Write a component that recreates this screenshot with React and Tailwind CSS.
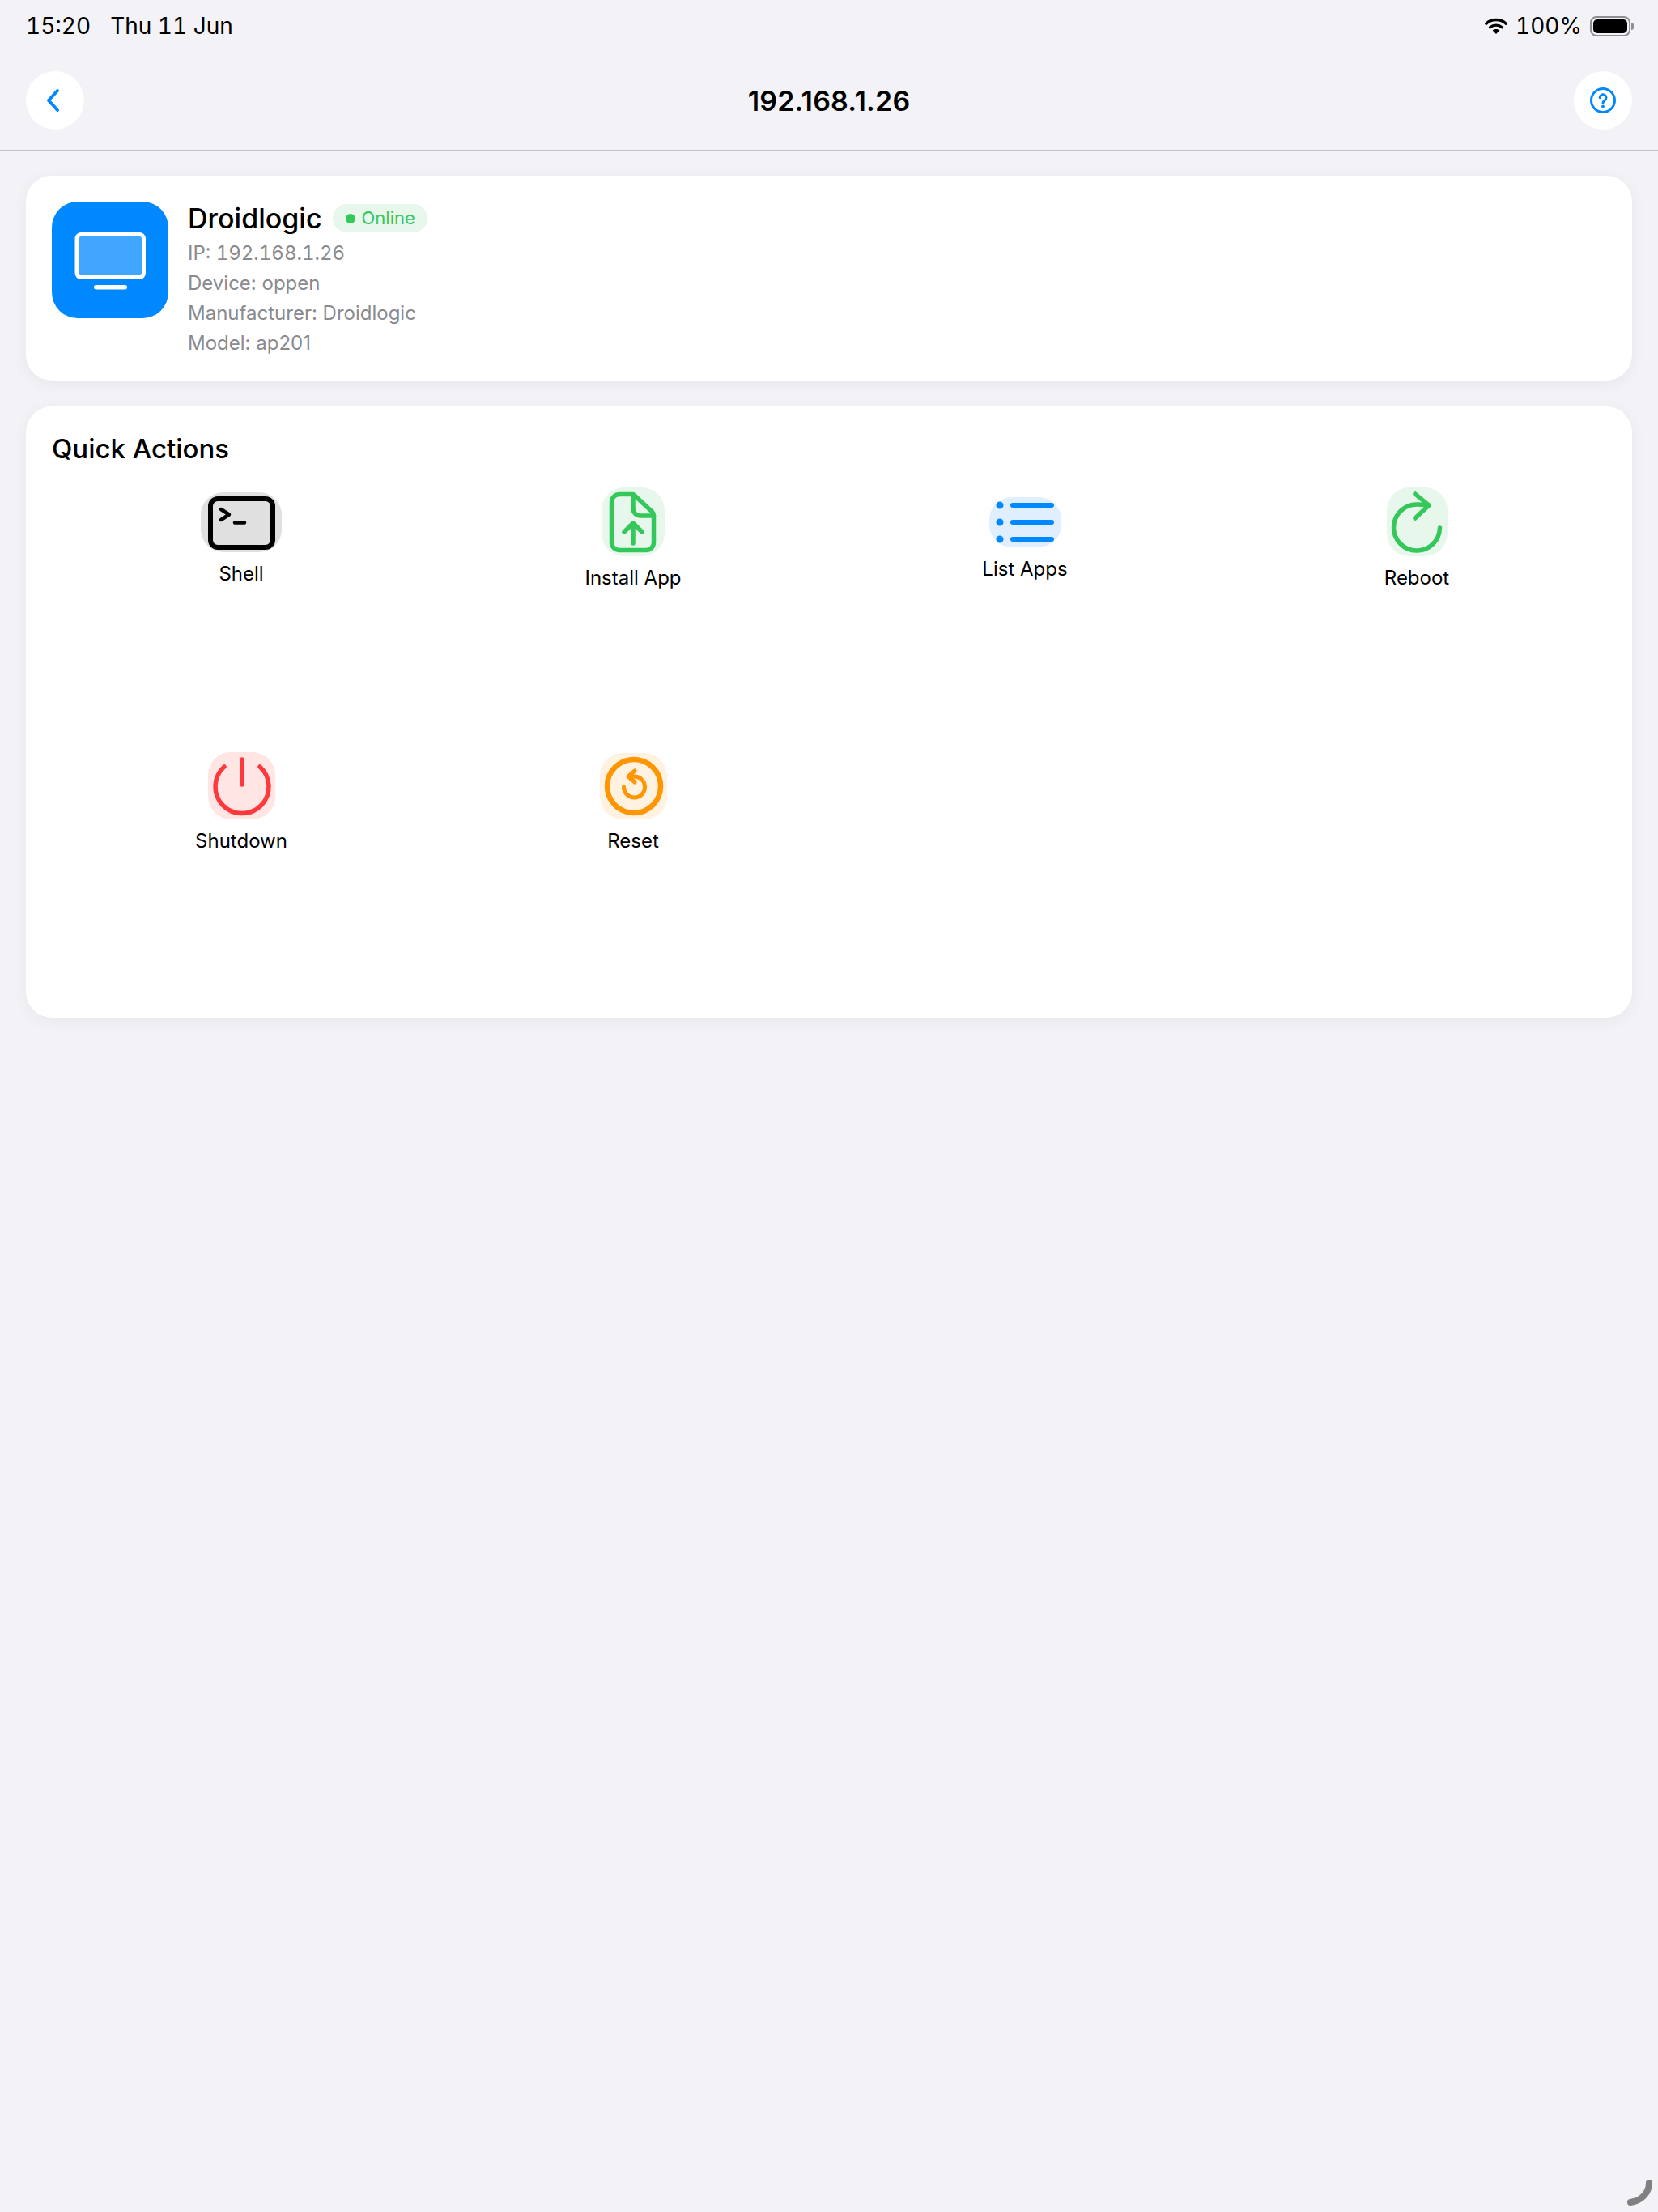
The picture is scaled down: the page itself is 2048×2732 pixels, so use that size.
import React from "react";

function Wifi() {
  return (
    <svg width="28" height="20" viewBox="0 0 28 20" fill="none">
      <path d="M1.8 7.2C8.6 1 19.4 1 26.2 7.2" stroke="black" strokeWidth="3.4" strokeLinecap="round" />
      <path d="M6.6 11.8C10.8 8.2 17.2 8.2 21.4 11.8" stroke="black" strokeWidth="3.4" strokeLinecap="round" />
      <path d="M14 20L9.6 15.6C12 13.6 16 13.6 18.4 15.6Z" fill="black" />
    </svg>
  );
}

function Battery() {
  return (
    <div className="flex items-center">
      <div className="w-[50px] h-[25px] rounded-[8px] border-[2px] border-[#8e8e93] p-[2px]">
        <div className="w-full h-full rounded-[5px] bg-black"></div>
      </div>
      <div className="w-[3px] h-[9px] rounded-r-full bg-[#8e8e93] ml-[1px]"></div>
    </div>
  );
}

function Monitor() {
  return (
    <svg width="144" height="144" viewBox="0 0 144 144" fill="none">
      <rect x="31" y="40.5" width="82.5" height="53" rx="5" fill="white" fillOpacity="0.25" stroke="white" strokeWidth="5" />
      <rect x="52" y="103" width="41" height="5.5" rx="2.75" fill="white" />
    </svg>
  );
}

const actions = [
  {
    label: "Shell",
    tile: "w-[100px] h-[74px] bg-[#e0e0e0] rounded-[28px]",
    stroke: "#000000",
    width: 6,
    paths: (
      <>
        <rect x="12" y="8" width="77" height="60" rx="9" />
        <path d="M25 21L35 27.5L25 34" strokeWidth="4.5" />
        <path d="M42 37.5H54" strokeWidth="4.5" />
      </>
    ),
  },
  {
    label: "Install App",
    tile: "w-[78px] h-[85px] bg-[#e8f7ec] rounded-[28px]",
    stroke: "#34c759",
    width: 5.5,
    paths: (
      <>
        <path d="M22 8.5H37q2.5 0 4.5 2L62.5 30q2 2 2 5V68a9.5 9.5 0 0 1-9.5 9.5H22a9.5 9.5 0 0 1-9.5-9.5V18a9.5 9.5 0 0 1 9.5-9.5Z" />
        <path d="M39 8.5V26a9 9 0 0 0 9 9H64.5" />
        <path d="M39 69V44M28 55L39 44L50 55" />
      </>
    ),
  },
  {
    label: "List Apps",
    tile: "w-[89px] h-[62px] bg-[#e0efff] rounded-[28px]",
    stroke: "#0088ff",
    width: 6,
    paths: (
      <>
        <path d="M29 10H77M29 31H77M29 52H77" />
        <circle cx="13" cy="10" r="4.5" fill="#0088ff" stroke="none" />
        <circle cx="13" cy="31" r="4.5" fill="#0088ff" stroke="none" />
        <circle cx="13" cy="52" r="4.5" fill="#0088ff" stroke="none" />
      </>
    ),
  },
  {
    label: "Reboot",
    tile: "w-[75px] h-[85px] bg-[#e8f7ec] rounded-[28px]",
    stroke: "#34c759",
    width: 5.5,
    paths: (
      <>
        <path d="M65.5 50A28.5 28.5 0 1 1 37 21Q44 21 52 22" />
        <path d="M35 8L52 22L35 38" />
      </>
    ),
  },
  {
    label: "Shutdown",
    tile: "w-[83px] h-[83px] bg-[#ffe6e5] rounded-[28px]",
    stroke: "#ff383c",
    width: 5.5,
    paths: (
      <>
        <path d="M20 18A33 33 0 1 0 64 18" />
        <path d="M42 9V40" />
      </>
    ),
  },
  {
    label: "Reset",
    tile: "w-[83px] h-[82px] bg-[#fff2e0] rounded-[28px]",
    stroke: "#ff9500",
    width: 6.5,
    paths: (
      <>
        <circle cx="42" cy="41" r="33" />
        <path d="M29.5 42A13 13 0 1 0 42 29H36" strokeWidth="5" />
        <path d="M43 22L35 29L43 36" strokeWidth="5" />
      </>
    ),
  },
];

function ActionItem({ action }) {
  return (
    <div className="h-[132px] flex flex-col items-center justify-center gap-[11px]">
      <div className={action.tile}>
        <svg
          className="w-full h-full overflow-visible"
          fill="none"
          stroke={action.stroke}
          strokeWidth={action.width}
          strokeLinecap="round"
          strokeLinejoin="round"
        >
          {action.paths}
        </svg>
      </div>
      <span className="text-[24px] leading-[32px] text-black">{action.label}</span>
    </div>
  );
}

export default function App() {
  return (
    <div className="relative min-h-[2732px] bg-[#f2f2f7] text-black font-['Inter','Liberation_Sans',sans-serif]">
      <div className="h-[64px] pl-8 pr-[30px] flex items-center justify-between text-[28px] leading-none">
        <div className="flex gap-[24px] tabular-nums">
          <span>15:20</span>
          <span>Thu 11 Jun</span>
        </div>
        <div className="flex items-center gap-[10px]">
          <Wifi />
          <span className="tabular-nums">100%</span>
          <Battery />
        </div>
      </div>

      <div className="h-[121.5px] px-8 flex items-center justify-between border-b-[1.5px] border-[#c6c6c8]">
        <button className="w-[72px] h-[72px] rounded-full bg-white flex items-center justify-center">
          <svg className="-translate-x-[2px]" width="20" height="30" viewBox="0 0 20 30" fill="none" stroke="#0088ff" strokeWidth="4" strokeLinecap="round" strokeLinejoin="round">
            <path d="M15 3L4 15L15 27" />
          </svg>
        </button>
        <h1 className="text-[34px] font-semibold tracking-[0.2px]">192.168.1.26</h1>
        <button className="w-[72px] h-[72px] rounded-full bg-white flex items-center justify-center">
          <svg width="32" height="32" viewBox="0 0 32 32" fill="none" stroke="#0088ff" strokeWidth="3" strokeLinecap="round">
            <circle cx="16" cy="16" r="14.5" />
            <path d="M12.2 12.8a3.9 3.9 0 1 1 6 3.2c-1.3.9-2.2 1.6-2.2 3.2" />
            <circle cx="16" cy="23.5" r="1.9" fill="#0088ff" stroke="none" />
          </svg>
        </button>
      </div>

      <div className="px-8 pt-[31.5px] flex flex-col gap-[32px]">
        <div className="bg-white rounded-[32px] p-8 pb-[28px] flex items-start gap-[24px] shadow-[0_4px_20px_rgba(0,0,0,0.05)]">
          <div className="w-[144px] h-[144px] rounded-[32px] bg-[#0088ff] shrink-0">
            <Monitor />
          </div>
          <div className="flex flex-col">
            <div className="h-[41px] flex items-center gap-[13px]">
              <span className="text-[34px] font-medium">Droidlogic</span>
              <span className="h-[35px] pl-[16px] pr-[15px] rounded-full bg-[#e8f7ec] text-[#34c759] text-[22px] flex items-center gap-[8px]">
                <span className="w-[12px] h-[12px] rounded-full bg-[#34c759]"></span>
                Online
              </span>
            </div>
            <div className="mt-[4px] text-[24px] leading-[37px] text-[#8a8a8e]">
              <div className="tabular-nums">IP: 192.168.1.26</div>
              <div>Device: oppen</div>
              <div>Manufacturer: Droidlogic</div>
              <div>Model: ap201</div>
            </div>
          </div>
        </div>

        <div className="bg-white rounded-[32px] px-8 pt-[28px] pb-[199px] shadow-[0_4px_20px_rgba(0,0,0,0.05)]">
          <h2 className="text-[33px] leading-[48px] font-medium">Quick Actions</h2>
          <div className="mt-[22px] -mx-2 grid grid-cols-4 gap-y-[194px]">
            {actions.map((action) => (
              <ActionItem key={action.label} action={action} />
            ))}
          </div>
        </div>
      </div>

      <svg className="absolute right-[6px] bottom-[8px]" width="32" height="32" viewBox="0 0 32 32" fill="none" stroke="#808080" strokeWidth="8" strokeLinecap="round">
        <path d="M27 4C27 16 18 26 4 28" />
      </svg>
    </div>
  );
}
